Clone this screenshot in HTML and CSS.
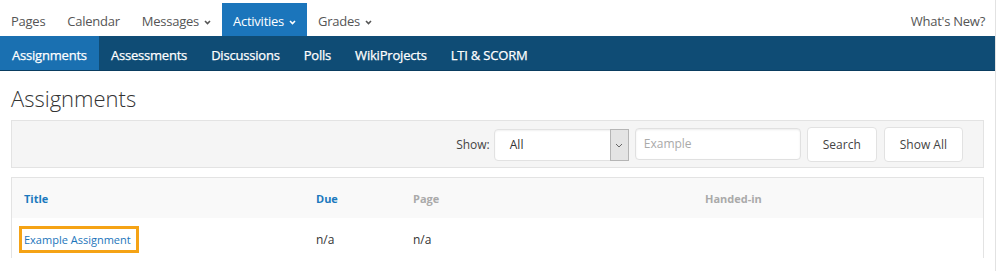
FILE: index.html
```html
<!DOCTYPE html>
<html>
<head>
<meta charset="utf-8">
<link rel="stylesheet" href="styles.css">
</head>
<body>
<div class="page">
  <nav class="topnav">
    <a class="top-item">Pages</a>
    <a class="top-item">Calendar</a>
    <a class="top-item">Messages <svg class="chev" viewBox="0 0 7 5" width="7" height="5"><path d="M1 1l2.5 2.5 2.5-2.5" fill="none" stroke="currentColor" stroke-width="1.6"/></svg></a>
    <a class="top-item active">Activities <svg class="chev" viewBox="0 0 7 5" width="7" height="5"><path d="M1 1l2.5 2.5 2.5-2.5" fill="none" stroke="currentColor" stroke-width="1.6"/></svg></a>
    <a class="top-item">Grades <svg class="chev" viewBox="0 0 7 5" width="7" height="5"><path d="M1 1l2.5 2.5 2.5-2.5" fill="none" stroke="currentColor" stroke-width="1.6"/></svg></a>
    <span class="spacer"></span>
    <a class="top-item whats-new">What's New?</a>
  </nav>
  <nav class="subnav">
    <a class="sub-item active">Assignments</a>
    <a class="sub-item">Assessments</a>
    <a class="sub-item">Discussions</a>
    <a class="sub-item">Polls</a>
    <a class="sub-item">WikiProjects</a>
    <a class="sub-item">LTI &amp; SCORM</a>
  </nav>
  <main class="content">
    <h1 class="title">Assignments</h1>
    <div class="filter-bar">
      <label class="show-label">Show:</label>
      <div class="select">
        <span class="select-value">All</span>
        <span class="select-arrow"><svg viewBox="0 0 8 5" width="8" height="5"><path d="M1 1l3 3 3-3" fill="none" stroke="#666" stroke-width="1"/></svg></span>
      </div>
      <div class="search-input">Example</div>
      <button class="btn btn-search">Search</button>
      <button class="btn btn-all">Show All</button>
    </div>
    <div class="table">
      <div class="row head">
        <div class="cell c-title link-head">Title</div>
        <div class="cell c-due link-head">Due</div>
        <div class="cell c-page plain-head">Page</div>
        <div class="cell c-hand plain-head">Handed-in</div>
      </div>
      <div class="row body-row">
        <div class="cell c-title"><a class="focus-link">Example Assignment</a></div>
        <div class="cell c-due">n/a</div>
        <div class="cell c-page">n/a</div>
        <div class="cell c-hand"></div>
      </div>
    </div>
  </main>
</div>
</body>
</html>
```

FILE: styles.css
```css
* { box-sizing: border-box; }
html, body { margin: 0; padding: 0; background: #fff; }
body {
  font-family: "Open Sans", "Noto Sans", sans-serif;
  color: #333;
  overflow: hidden;
}
.page {
  width: 996px;
  height: 271px;
  border-right: 1px solid #e2e2e2;
}
.topnav {
  display: flex;
  align-items: flex-end;
  height: 36px;
  padding-right: 10px;
}
.top-item {
  display: flex;
  align-items: flex-start;
  height: 33px;
  padding: 9px 11px 0;
  font-size: 13px;
  line-height: 18px;
  letter-spacing: -0.25px;
  color: #555;
  gap: 5px;
}
.top-item .chev { margin-top: 8px; }
.top-item.active {
  background: #1b75bb;
  color: #fff;
}
.spacer { flex: 1; }
.whats-new { padding-right: 0; }
.subnav {
  display: flex;
  height: 35px;
  background: #0f4c75;
  border-bottom: 1px solid #0a3d60;
}
.sub-item {
  display: block;
  padding: 10px 12px 0;
  font-size: 13px;
  line-height: 18px;
  letter-spacing: -0.2px;
  font-weight: 400;
  color: #fff;
  -webkit-text-stroke: 0.25px #fff;
}
.sub-item.active { background: #1a70b1; }
.content { padding: 0 11px; }
.title {
  margin: 0;
  padding-top: 12px;
  height: 49px;
  font-size: 22px;
  font-weight: 300;
  color: #333;
  line-height: 30px;
}
.filter-bar {
  display: flex;
  align-items: center;
  height: 48px;
  background: #f5f5f5;
  border: 1px solid #e3e3e3;
  justify-content: flex-end;
  padding-right: 20px;
}
.show-label {
  font-size: 12px;
  color: #444;
  margin-right: 4px;
}
.select {
  display: flex;
  width: 135px;
  height: 32px;
  margin-top: 2px;
  background: #fff;
  border: 1px solid #e2e2e2;
  border-radius: 4px 0 0 4px;
  box-shadow: inset 0 1px 2px rgba(0,0,0,0.06);
}
.select-value {
  flex: 1;
  font-size: 12px;
  color: #333;
  padding-left: 15px;
  line-height: 30px;
}
.select-arrow {
  width: 19px;
  display: flex;
  align-items: center;
  justify-content: center;
  background: #e4e4e4;
  margin: -1px -1px -1px 0;
  border: 1px solid #b5b5b5;
}
.search-input {
  width: 166px;
  height: 32px;
  margin-left: 6px;
  margin-bottom: 1px;
  background: #fff;
  border: 1px solid #e0e0e0;
  border-radius: 4px;
  box-shadow: inset 0 1px 2px rgba(0,0,0,0.08);
  font-size: 12px;
  color: #aaa;
  padding-left: 8px;
  line-height: 30px;
}
.btn {
  height: 35px;
  margin-left: 6px;
  background: #fff;
  border: 1px solid #e2e2e2;
  border-radius: 4px;
  font-family: inherit;
  font-size: 12px;
  color: #444;
}
.btn-search { padding: 0 15px; }
.btn-all { margin-left: 7px; padding: 0 15px; }
.table {
  margin-top: 9px;
  border: 1px solid #e3e3e3;
  border-bottom: none;
  height: 81px;
}
.row { display: flex; }
.row.head {
  height: 40px;
  background: #f9f9f9;
  align-items: center;
}
.row.body-row {
  height: 43px;
  align-items: center;
}
.cell { padding-left: 12px; font-size: 12px; }
.c-title { width: 292px; }
.c-due { width: 97px; }
.c-page { width: 292px; }
.c-hand { flex: 1; }
.head .cell { font-size: 11px; font-weight: 700; }
.link-head { color: #1c79be; }
.plain-head { color: #aaa; }
.body-row .cell { color: #333; }
.body-row .c-title { padding-left: 7px; }
.focus-link {
  display: inline-block;
  border: 3px solid #f5a315;
  padding: 2px 5px 2px 2px;
  color: #1b75bb;
  font-size: 11px;
  line-height: 17px;
}
```
